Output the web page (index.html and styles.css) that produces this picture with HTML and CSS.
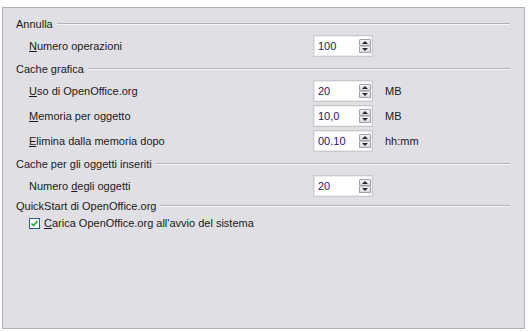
FILE: index.html
```html
<!DOCTYPE html>
<html lang="it">
<head>
    <meta charset="UTF-8">
    <title>Memoria</title>
    <link rel="stylesheet" href="styles.css">
</head>
<body>
    <div class="panel">
        <div class="group">
            <div class="heading">Annulla</div>
            <div class="row">
                <span class="label"><u>N</u>umero operazioni</span>
                <div class="spin"><span class="value">100</span><span class="arrows"><i class="up"></i><i class="down"></i></span></div>
            </div>
        </div>

        <div class="group">
            <div class="heading">Cache grafica</div>
            <div class="row">
                <span class="label"><u>U</u>so di OpenOffice.org</span>
                <div class="spin"><span class="value">20</span><span class="arrows"><i class="up"></i><i class="down"></i></span></div>
                <span class="unit">MB</span>
            </div>
            <div class="row">
                <span class="label"><u>M</u>emoria per oggetto</span>
                <div class="spin"><span class="value">10,0</span><span class="arrows"><i class="up"></i><i class="down"></i></span></div>
                <span class="unit">MB</span>
            </div>
            <div class="row">
                <span class="label"><u>E</u>limina dalla memoria dopo</span>
                <div class="spin"><span class="value">00.10</span><span class="arrows"><i class="up"></i><i class="down"></i></span></div>
                <span class="unit">hh:mm</span>
            </div>
        </div>

        <div class="group">
            <div class="heading">Cache per gli oggetti inseriti</div>
            <div class="row">
                <span class="label">Numero <u>d</u>egli oggetti</span>
                <div class="spin"><span class="value">20</span><span class="arrows"><i class="up"></i><i class="down"></i></span></div>
            </div>
        </div>

        <div class="group quickstart">
            <div class="heading">QuickStart di OpenOffice.org</div>
            <label class="check-row">
                <span class="checkbox">
                    <svg width="9" height="9" viewBox="0 0 9 9"><path d="M1.5 4.5 L3.5 6.5 L7.5 2" fill="none" stroke="#1fa33a" stroke-width="1.6"/></svg>
                </span>
                <span><u>C</u>arica OpenOffice.org all'avvio del sistema</span>
            </label>
        </div>
    </div>
</body>
</html>
```

FILE: styles.css
```css
* {
    box-sizing: border-box;
}
body {
    margin: 0;
    background: #ffffff;
    font-family: "Liberation Sans", Arial, sans-serif;
    font-size: 11px;
    color: #1b1b1b;
}
.panel {
    margin: 7px 4px 0 2px;
    height: 322px;
    background: #dfdfe4;
    border: 1px solid #b2b2b6;
    padding: 8px 14px 0 13px;
}
.group + .group {
    margin-top: 4px;
}
.group.quickstart {
    margin-top: 1px;
}
.heading {
    display: flex;
    align-items: center;
    height: 16px;
}
.heading::after {
    content: "";
    flex: 1;
    margin-left: 4px;
    border-top: 1px solid #b3b3b8;
    border-bottom: 1px solid #f6f6f8;
}
.row {
    display: flex;
    align-items: center;
    height: 22px;
    margin-top: 3px;
    padding-left: 13px;
}
.label {
    width: 284px;
}
u {
    text-decoration: underline;
    text-underline-offset: 1px;
}
.spin {
    display: flex;
    align-items: center;
    width: 60px;
    height: 22px;
    background: #ffffff;
    border: 1px solid #c9c9ce;
    box-shadow: inset 0 0 0 1px #ececef;
    padding: 0 1px 0 4px;
}
.value {
    flex: 1;
    color: #20206a;
}
.arrows {
    display: flex;
    flex-direction: column;
    width: 12px;
    height: 14px;
}
.arrows i {
    flex: 1;
    display: flex;
    align-items: center;
    justify-content: center;
    border: 1px solid #a2a2a8;
    background: linear-gradient(#f4f4f6, #d8d8de);
    border-radius: 1px;
}
.arrows i + i {
    margin-top: 0;
    border-top-color: #c4c4c8;
}
.arrows i::before {
    content: "";
    width: 0;
    height: 0;
    border-left: 3px solid transparent;
    border-right: 3px solid transparent;
}
.arrows .up::before {
    border-bottom: 3px solid #2a2a2a;
}
.arrows .down::before {
    border-top: 3px solid #2a2a2a;
}
.unit {
    margin-left: 12px;
}
.check-row {
    display: flex;
    align-items: center;
    height: 14px;
    margin-top: 2px;
    padding-left: 13px;
    gap: 4px;
}
.checkbox {
    display: flex;
    align-items: center;
    justify-content: center;
    width: 11px;
    height: 11px;
    background: #ffffff;
    border: 1px solid #2a5f8e;
}
```
